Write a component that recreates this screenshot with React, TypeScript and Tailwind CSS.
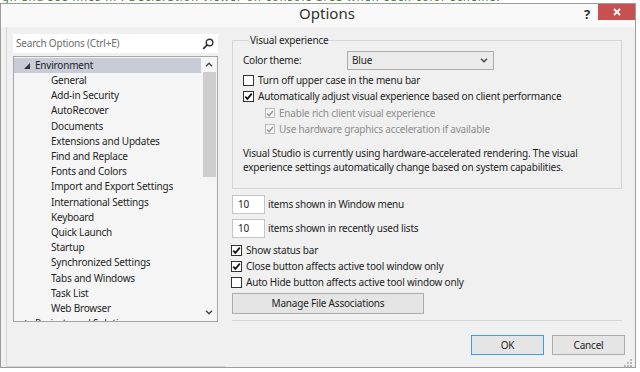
import clsx from 'clsx';

const treeItems = [
  'General',
  'Add-in Security',
  'AutoRecover',
  'Documents',
  'Extensions and Updates',
  'Find and Replace',
  'Fonts and Colors',
  'Import and Export Settings',
  'International Settings',
  'Keyboard',
  'Quick Launch',
  'Startup',
  'Synchronized Settings',
  'Tabs and Windows',
  'Task List',
  'Web Browser',
];

const Check = ({ checked, disabled, small }: { checked?: boolean; disabled?: boolean; small?: boolean }) => (
  <span
    className={clsx(
      'flex items-center justify-center shrink-0 border',
      small ? 'w-[10px] h-[10px]' : 'w-[11px] h-[11px]',
      disabled ? 'border-[#bcbcbc] bg-[#f4f4f4]' : 'border-[#333333] bg-white',
    )}
  >
    {checked && (
      <svg width="9" height="9" viewBox="0 0 9 9">
        <path
          d="M1.2 4.6 L3.4 6.9 L7.8 1.6"
          stroke={disabled ? '#9a9a9a' : '#111111'}
          strokeWidth="1.7"
          fill="none"
        />
      </svg>
    )}
  </span>
);

const CheckRow = ({
  label,
  checked,
  disabled,
  className,
}: {
  label: string;
  checked?: boolean;
  disabled?: boolean;
  className?: string;
}) => (
  <div className={clsx('flex items-center h-[16px]', className)}>
    <Check checked={checked} disabled={disabled} small={disabled} />
    <span className={clsx('ml-[4px] whitespace-nowrap', disabled ? 'text-[#8d8d8d]' : 'text-[#1e1e1e]')}>{label}</span>
  </div>
);

const Chevron = ({ up }: { up?: boolean }) => (
  <svg width="8" height="5" viewBox="0 0 8 5">
    <path d={up ? 'M1 4.2 L4 1.2 L7 4.2' : 'M1 0.8 L4 3.8 L7 0.8'} stroke="#444" strokeWidth="1.4" fill="none" />
  </svg>
);

const App = () => {
  return (
    <div className="w-[640px] h-[372px] bg-white overflow-hidden font-['Noto_Sans',sans-serif] text-[10px] tracking-[-0.2px] text-[#1e1e1e]">
      {/* page behind the dialog */}
      <div className="h-[3px] overflow-hidden pl-[2px]">
        <p className="-mt-[9px] text-[11px] leading-[12px] text-[#3f7a1d] whitespace-nowrap tracking-[1px]">
          gh and see lines in . Declaration viewer on console area when each color scheme.
        </p>
      </div>

      <div className="w-[636px] h-[365px] border border-[#9c9c9c] bg-[#f0f0f0] flex flex-col">
        {/* title bar */}
        <div className="h-[26px] bg-[#f9f9f9] relative flex justify-center pl-[18px]">
          <span className="text-[15px] leading-[20px] tracking-normal text-[#333333] -mt-[1px]">Options</span>
          <div className="absolute right-0 top-0 flex items-start">
            <span className="text-[13px] font-bold text-[#333] mr-[8px] mt-[1px]">?</span>
            <div className="w-[37px] h-[16px] bg-[#c75050] flex items-center justify-center">
              <svg width="8" height="8" viewBox="0 0 8 8">
                <path d="M1 1 L7 7 M7 1 L1 7" stroke="#ffffff" strokeWidth="1.8" />
              </svg>
            </div>
          </div>
        </div>

        {/* body */}
        <div className="flex-1 flex">
          {/* left pane */}
          <div className="ml-[5px] w-[219px] border-l border-b border-[#d4d4d4] pl-[6px] pt-[7px]">
            <div className="w-[205px] h-[19px] bg-white flex items-center justify-between pl-[3px] pr-[4px]">
              <span className="text-[#6d6d6d]">Search Options (Ctrl+E)</span>
              <svg width="12" height="12" viewBox="0 0 12 12">
                <circle cx="7.5" cy="4.5" r="3.3" stroke="#333" strokeWidth="1.4" fill="none" />
                <path d="M5.2 6.8 L1.2 10.8" stroke="#333" strokeWidth="1.8" />
              </svg>
            </div>
            <div className="mt-[3px] w-[205px] h-[266px] border border-[#a5a5a5] bg-[#f5f5f5] flex overflow-hidden">
              <div className="flex-1 pt-[1px] overflow-hidden">
                <div className="h-[15px] bg-[#c9cbd7] flex items-center">
                  <svg width="6" height="6" viewBox="0 0 6 6" className="ml-[10px]">
                    <polygon points="6,0 6,6 0,6" fill="#333" />
                  </svg>
                  <span className="ml-[5px]">Environment</span>
                </div>
                {treeItems.map((t) => (
                  <div key={t} className="h-[15.2px] flex items-center pl-[37px] whitespace-nowrap">
                    {t}
                  </div>
                ))}
                <div className="h-[15.2px] flex items-center whitespace-nowrap">
                  <svg width="5" height="7" viewBox="0 0 5 7" className="ml-[11px]">
                    <polygon points="0,0 5,3.5 0,7" fill="none" stroke="#777" />
                  </svg>
                  <span className="ml-[5px]">Projects and Solutions</span>
                </div>
              </div>
              <div className="w-[16px] flex flex-col items-center">
                <div className="h-[15px] flex items-center justify-center">
                  <Chevron up />
                </div>
                <div className="w-[13px] h-[105px] bg-[#cdcdcd]" />
                <div className="flex-1" />
                <div className="h-[16px] flex items-center justify-center mb-[1px]">
                  <Chevron />
                </div>
              </div>
            </div>
          </div>

          {/* right pane */}
          <div className="ml-[7px] w-[390px] flex flex-col pt-[5px]">
            <fieldset className="border border-[#d5d5d5] px-[10px] pb-[14px]">
              <legend className="ml-[6px] px-[1px] leading-[16px]">Visual experience</legend>
              <div className="mt-[3px] flex items-center">
                <span className="w-[104px]">Color theme:</span>
                <div className="w-[147px] h-[19px] border border-[#acacac] bg-[#ebebeb] flex items-center justify-between pl-[4px] pr-[5px]">
                  <span>Blue</span>
                  <Chevron />
                </div>
              </div>
              <CheckRow className="mt-[2px]" label="Turn off upper case in the menu bar" />
              <CheckRow label="Automatically adjust visual experience based on client performance" checked />
              <div className="ml-[22px] mt-[1px]">
                <CheckRow label="Enable rich client visual experience" checked disabled />
                <CheckRow label="Use hardware graphics acceleration if available" checked disabled />
              </div>
              <p className="mt-[9px] leading-[14px] whitespace-nowrap">
                Visual Studio is currently using hardware-accelerated rendering. The visual
                <br />
                experience settings automatically change based on system capabilities.
              </p>
            </fieldset>

            <div className="mt-[6px] flex items-center">
              <div className="w-[33px] h-[19px] bg-white border border-[#c5c5c5] flex items-center pl-[5px]">10</div>
              <span className="ml-[3px]">items shown in Window menu</span>
            </div>
            <div className="mt-[5px] flex items-center">
              <div className="w-[33px] h-[19px] bg-white border border-[#c5c5c5] flex items-center pl-[5px]">10</div>
              <span className="ml-[3px]">items shown in recently used lists</span>
            </div>

            <div className="mt-[4px] -ml-[1px]">
              <CheckRow label="Show status bar" checked />
              <CheckRow label="Close button affects active tool window only" checked />
              <CheckRow label="Auto Hide button affects active tool window only" />
            </div>

            <div className="mt-[3px] w-[192px] h-[21px] border border-[#acacac] bg-[#e5e5e5] flex items-center justify-center">
              Manage File Associations
            </div>

            <div className="mt-[6px] h-px bg-[#d5d5d5]" />

            <div className="mt-[14px] flex justify-end gap-[8px] -mr-[3px]">
              <div className="w-[73px] h-[20px] border border-[#3c9af5] bg-[#e5e5e5] flex items-center justify-center">
                OK
              </div>
              <div className="w-[73px] h-[20px] border border-[#acacac] bg-[#e5e5e5] flex items-center justify-center">
                Cancel
              </div>
            </div>
            <div className="flex justify-end -mr-[10px] mt-[4px]">
              <svg width="8" height="8" viewBox="0 0 8 8">
                <rect x="6" y="0" width="2" height="2" fill="#b8b8b8" />
                <rect x="3" y="3" width="2" height="2" fill="#b8b8b8" />
                <rect x="6" y="3" width="2" height="2" fill="#b8b8b8" />
                <rect x="0" y="6" width="2" height="2" fill="#b8b8b8" />
                <rect x="3" y="6" width="2" height="2" fill="#b8b8b8" />
                <rect x="6" y="6" width="2" height="2" fill="#b8b8b8" />
              </svg>
            </div>
          </div>
        </div>
      </div>
    </div>
  );
};

export default App;
